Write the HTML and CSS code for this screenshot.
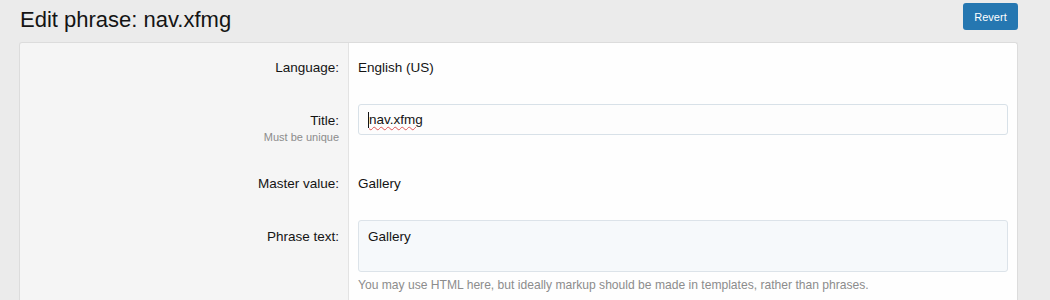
FILE: index.html
```html
<!DOCTYPE html>
<html lang="en">
<head>
<meta charset="utf-8">
<title>Edit phrase</title>
<link rel="stylesheet" href="styles.css">
</head>
<body>
<div class="page">
  <div class="header">
    <h1 class="title">Edit phrase: nav.xfmg</h1>
    <button class="btn">Revert</button>
  </div>
  <div class="card">
    <div class="row row-lang">
      <div class="label"><span>Language:</span></div>
      <div class="value"><span class="text">English (US)</span></div>
    </div>
    <div class="row row-title">
      <div class="label"><span>Title:</span><span class="hint">Must be unique</span></div>
      <div class="value"><div class="input"><span class="caret"></span><span class="spell">nav.xfmg</span></div></div>
    </div>
    <div class="row row-master">
      <div class="label"><span>Master value:</span></div>
      <div class="value"><span class="text">Gallery</span></div>
    </div>
    <div class="row row-phrase">
      <div class="label"><span>Phrase text:</span></div>
      <div class="value">
        <div class="textarea">Gallery</div>
        <div class="explain">You may use HTML here, but ideally markup should be made in templates, rather than phrases.</div>
      </div>
    </div>
  </div>
</div>
</body>
</html>
```
FILE: styles.css
```css
* { box-sizing: border-box; }
html, body { margin: 0; padding: 0; }
body {
  background: #ebebeb;
  font-family: "Liberation Sans", Arial, sans-serif;
  color: #141414;
  width: 1050px;
  height: 300px;
  overflow: hidden;
}
.page { padding: 3px 32px 0 19px; }
.header {
  display: flex;
  justify-content: space-between;
  align-items: flex-start;
  height: 39px;
}
.title {
  margin: 4px 0 0 1px;
  font-weight: normal;
  font-size: 22px;
  line-height: 26px;
  color: #141414;
}
.btn {
  background: #2577b1;
  color: #fff;
  border: none;
  border-radius: 3px;
  font-family: "Liberation Sans", Arial, sans-serif;
  font-size: 11px;
  width: 55px;
  height: 27px;
  padding: 0;
  margin-right: 0;
}
.card {
  background: #fefefe;
  border: 1px solid #dcdcdc;
  border-bottom: none;
  border-radius: 3px 3px 0 0;
  width: 999px;
  height: 260px;
  background-image: linear-gradient(to right, #f5f5f5 0, #f5f5f5 328px, #e3e3e3 328px, #e3e3e3 329px, transparent 329px);
}
.row { display: flex; font-size: 13.5px; }
.label {
  width: 329px;
  padding-right: 10px;
  text-align: right;
  display: flex;
  flex-direction: column;
  align-items: flex-end;
  color: #141414;
}
.hint { font-size: 11px; color: #8c8c8c; margin-top: 3px; }
.value { flex: 1; padding-left: 9px; padding-right: 9px; }
.value .text { font-size: 13.5px; }
.row-lang { padding-top: 17px; height: 61px; }
.row-title { padding-top: 0; height: 67px; }
.row-title .label { padding-top: 9px; }
.input {
  height: 31px;
  border: 1px solid #d8e1e8;
  border-radius: 3px;
  background: #fdfdfd;
  padding: 7px 0 0 9px;
  font-size: 13.5px;
  display: flex;
  align-items: flex-start;
}
.caret { display: inline-block; width: 1px; height: 16px; background: #141414; margin-top: 0; }
.spell { text-decoration: underline wavy #e05555; text-decoration-thickness: 1px; text-underline-offset: 2px; }
.row-master { height: 49px; padding-top: 0; }
.row-master .label, .row-master .value { padding-top: 5px; }
.row-phrase .label { padding-top: 9px; }
.textarea {
  height: 52px;
  border: 1px solid #dce3e9;
  border-radius: 3px;
  background: #f6f9fb;
  padding: 8px 9px;
  font-size: 13.5px;
}
.explain { font-size: 12.1px; color: #8c8c8c; margin-top: 6px; }
```
